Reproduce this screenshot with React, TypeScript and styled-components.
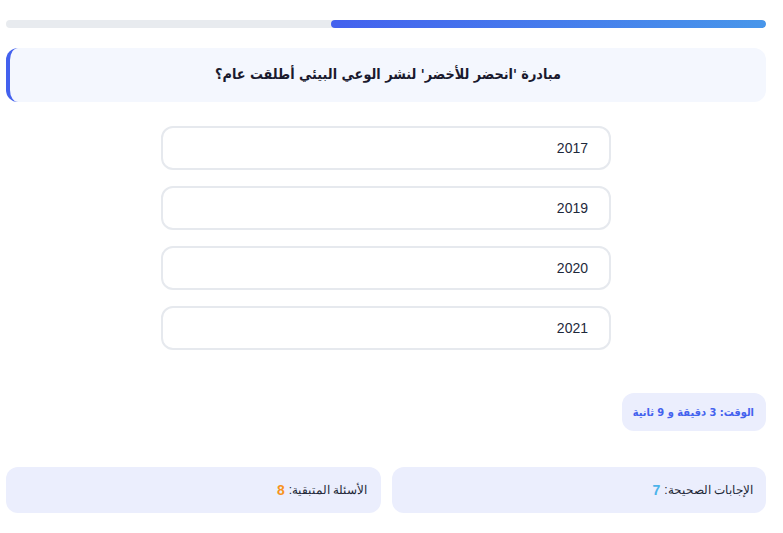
import React from "react";
import styled, { createGlobalStyle } from "styled-components";

const Global = createGlobalStyle`
  html, body { margin: 0; padding: 0; background: #ffffff; }
  body { font-family: "Liberation Sans", "Noto Sans", sans-serif; color: #1f2937; }
`;

const Page = styled.div`
  direction: rtl;
  width: 760px;
  margin-left: 6px;
  padding-top: 20px;
  display: flex;
  flex-direction: column;
`;

const Track = styled.div`
  height: 8px;
  border-radius: 4px;
  background: #e8ebef;
  overflow: hidden;
  display: flex;
`;

const Fill = styled.div`
  height: 100%;
  border-radius: 4px;
  background: linear-gradient(to left, #4896ea, #4361ee);
`;

const Question = styled.div`
  margin-top: 20px;
  height: 54px;
  box-sizing: border-box;
  background: #f4f7fe;
  border-radius: 12px;
  border-left: 4px solid #4361ee;
  display: flex;
  align-items: center;
  justify-content: center;
  padding-bottom: 3px;
  font-family: "DejaVu Sans Condensed", "DejaVu Sans", sans-serif;
  font-size: 14.3px;
  font-weight: 700;
  color: #1a1a2e;
`;

const Options = styled.div`
  margin-top: 24px;
  display: flex;
  flex-direction: column;
  align-items: center;
  gap: 16px;
`;

const Option = styled.button`
  width: 450px;
  height: 44px;
  box-sizing: border-box;
  border: 2px solid #e6e9ee;
  border-radius: 12px;
  background: #fff;
  text-align: right;
  padding: 0 21px;
  font-family: inherit;
  font-size: 14px;
  color: #1e293b;
  direction: rtl;
`;

const TimerRow = styled.div`
  margin-top: 43px;
  display: flex;
`;

const Timer = styled.div`
  background: #ebeefd;
  border-radius: 12px;
  height: 38px;
  padding: 0 12px 0 11px;
  display: flex;
  align-items: center;
  font-family: "DejaVu Sans Condensed", "DejaVu Sans", sans-serif;
  font-size: 11px;
  font-weight: 700;
  color: #4361ee;
`;

const Stats = styled.div`
  margin-top: 36px;
  display: grid;
  grid-template-columns: 1fr 1fr;
  gap: 11px;
`;

const Card = styled.div`
  background: #ebeefd;
  border-radius: 12px;
  height: 46px;
  padding: 0 13px;
  display: flex;
  align-items: center;
  font-size: 12px;
  color: #1f2937;
`;

const Num = styled.span<{ $color: string }>`
  font-weight: 700;
  font-size: 14px;
  color: ${(p) => p.$color};
  margin-right: 4px;
`;

export default function App() {
  const progress = 57.2;
  return (
    <>
      <Global />
      <Page>
        <Track>
          <Fill style={{ width: `${progress}%` }} />
        </Track>
        <Question>مبادرة 'انحضر للأخضر' لنشر الوعي البيئي أطلقت عام؟</Question>
        <Options>
          {["2017", "2019", "2020", "2021"].map((y) => (
            <Option key={y}>{y}</Option>
          ))}
        </Options>
        <TimerRow>
          <Timer>الوقت: 3 دقيقة و 9 ثانية</Timer>
        </TimerRow>
        <Stats>
          <Card>
            الإجابات الصحيحة: <Num $color="#4cb3ea">7</Num>
          </Card>
          <Card>
            الأسئلة المتبقية: <Num $color="#f7941d">8</Num>
          </Card>
        </Stats>
      </Page>
    </>
  );
}
